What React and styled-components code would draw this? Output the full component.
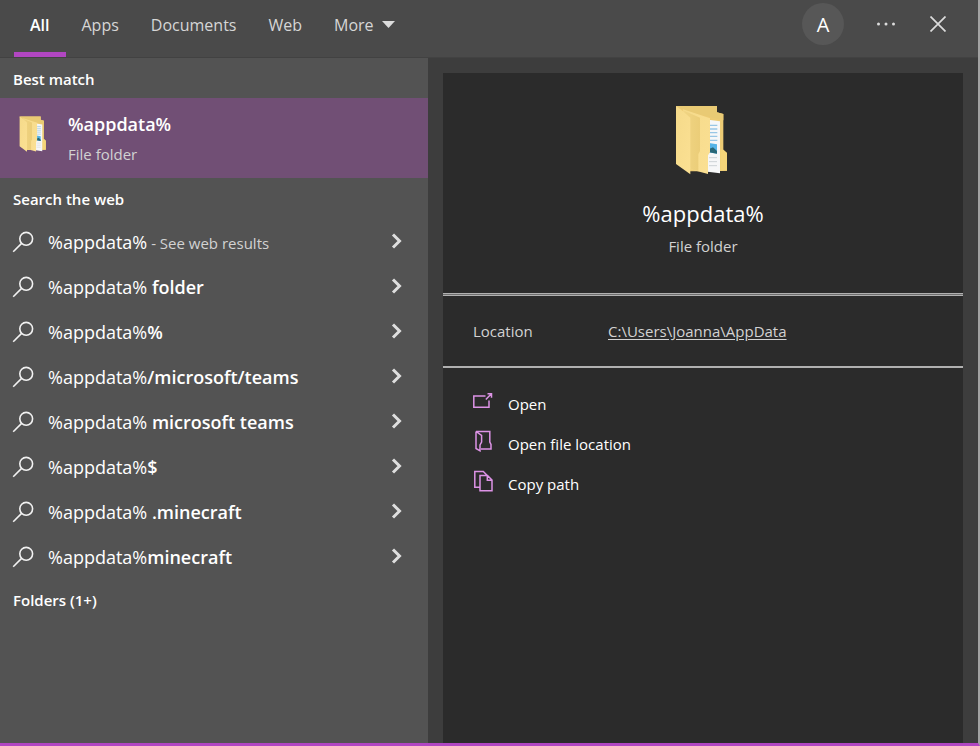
import React, { useState } from "react";
import styled, { createGlobalStyle } from "styled-components";

const GlobalStyle = createGlobalStyle`
  * {
    box-sizing: border-box;
  }
  body {
    margin: 0;
    background: #3d3d3d;
    color: #ffffff;
    font-family: "Open Sans", "Noto Sans", sans-serif;
    font-size: 15px;
  }
  button {
    border: 0;
    padding: 0;
    background: none;
    color: inherit;
    font: inherit;
    cursor: pointer;
  }
  h1, h2, p, ul, dl, dd {
    margin: 0;
    padding: 0;
  }
  svg {
    display: block;
    flex: none;
  }
`;

const Window = styled.div`
  display: flex;
  flex-direction: column;
  min-height: 100vh;
  border-right: 2px solid #a3a3a3;
  border-bottom: 3px solid #b146c2;
`;

const TopBar = styled.header`
  display: flex;
  justify-content: space-between;
  height: 58px;
  padding: 0 20px 0 14px;
  background: #4a4a4a;
  border-bottom: 1px solid #424242;
`;

const Tabs = styled.nav`
  display: flex;
`;

const Tab = styled.button`
  display: flex;
  align-items: center;
  gap: 8px;
  padding: 0 16px 3px;
  border-bottom: 5px solid ${(props) => (props.$active ? "#b146c2" : "transparent")};
  color: ${(props) => (props.$active ? "#ffffff" : "#d6d6d6")};
  font-size: 16px;
  font-weight: ${(props) => (props.$active ? 600 : 400)};
`;

const Tools = styled.div`
  display: flex;
  align-items: center;
  gap: 12px;
  padding-bottom: 9px;
`;

const Avatar = styled.button`
  width: 42px;
  height: 42px;
  margin-right: 10px;
  border-radius: 50%;
  background: #575757;
  font-size: 20px;
`;

const ToolBtn = styled.button`
  display: flex;
  align-items: center;
  justify-content: center;
  width: 40px;
  height: 40px;
  color: #dcdcdc;
`;

const Main = styled.main`
  display: flex;
  flex: 1;
`;

const Results = styled.section`
  flex: none;
  width: 428px;
  background: #535353;
`;

const GroupTitle = styled.h2`
  padding: 2px 13px 0;
  font-size: 15px;
  font-weight: 600;
  line-height: 38px;
`;

const BestMatch = styled.button`
  display: flex;
  gap: 20px;
  width: 100%;
  height: 80px;
  padding: 11px 19px;
  background: #714f75;
  text-align: left;
  svg {
    margin-top: 7px;
  }
`;

const BestName = styled.p`
  font-size: 18px;
  font-weight: 600;
  line-height: 30px;
`;

const Kind = styled.p`
  color: #d2d2d2;
  line-height: 30px;
`;

const List = styled.ul`
  list-style: none;
  padding-top: 1px;
`;

const ResultRow = styled.button`
  display: flex;
  align-items: center;
  gap: 14px;
  width: 100%;
  height: 45px;
  padding: 0 25px 0 12px;
  text-align: left;
  svg:last-child {
    margin-bottom: 2px;
  }
`;

const ResultText = styled.span`
  flex: 1;
  font-size: 18px;
  white-space: pre;
  b {
    font-weight: 600;
  }
  small {
    color: #d2d2d2;
    font-size: 15px;
  }
`;

const Details = styled.section`
  flex: 1;
  min-width: 0;
  margin: 15px 15px 0;
  background: #2b2b2b;
`;

const Hero = styled.div`
  display: flex;
  flex-direction: column;
  align-items: center;
  height: 221px;
  padding-top: 32px;
  border-bottom: 1px solid #b0b0b0;
`;

const HeroName = styled.h1`
  margin-top: 20px;
  font-size: 22px;
  font-weight: 400;
  line-height: 36px;
`;

const Info = styled.dl`
  display: flex;
  align-items: center;
  height: 74px;
  padding: 0 30px;
  border-top: 1px solid #6e6e6e;
  border-bottom: 2px solid #b0b0b0;
  box-shadow: inset 0 1px #b0b0b0;
  color: #d2d2d2;
  dt {
    width: 135px;
  }
  a {
    color: inherit;
    text-underline-offset: 2px;
  }
`;

const Actions = styled.ul`
  list-style: none;
  padding: 16px 30px;
`;

const Action = styled.button`
  display: flex;
  align-items: center;
  gap: 15px;
  height: 40px;
  svg {
    margin-bottom: 6px;
  }
`;


const FolderIcon = ({ width, height }) => (
  <svg width={width} height={height} viewBox="0 0 168 210" aria-hidden="true">
    <defs>
      <linearGradient id="cover" x1="0" y1="0" x2="1" y2="1">
        <stop offset="0" stopColor="#f5da8a" />
        <stop offset="1" stopColor="#fbe093" />
      </linearGradient>
      <linearGradient id="fold" x1="0" y1="0" x2="1" y2="0">
        <stop offset="0" stopColor="#f0d483" />
        <stop offset="1" stopColor="#ebcd78" />
      </linearGradient>
    </defs>
    <path d="M3 3H126V22L145 27V134L156 144V197L120 199H45Z" fill="#edcb74" />
    <path d="M3 3H126V22L145 27V46L40 20Z" fill="#e9ca74" />
    <path d="M145 134L156 144V197H136V134Z" fill="#f5d579" />
    <path d="M100 44L135 49V205L98 200Z" fill="#f6f7f8" />
    <path d="M105 61H127M105 72H127M105 83H127M105 94H127M105 106H127" stroke="#98c6e5" strokeWidth="4" />
    <path d="M102 114L126 118V146L102 142Z" fill="#55b4e8" />
    <path d="M102 132L114 127L126 138V146L102 142Z" fill="#286777" />
    <path d="M102 158H126M102 170H126M102 182H126" stroke="#ccd2d6" strokeWidth="3" />
    <path d="M24 13L105 40V142L99 151V207L46 193Z" fill="url(#cover)" />
    <path d="M27 17L75 38V138L70 148V198L46 193Z" fill="url(#fold)" />
    <path d="M3 3L22 17L46 38V208L3 177Z" fill="url(#cover)" />
  </svg>
);

const SearchIcon = () => (
  <svg width="22" height="22" viewBox="0 0 22 22" fill="none" stroke="#f2f2f2" strokeWidth="1.6">
    <circle cx="14.2" cy="7.8" r="6.4" />
    <path d="M9.6 12.4L1.2 20.8" />
  </svg>
);

const ChevronIcon = () => (
  <svg width="12" height="16" viewBox="0 0 12 16" fill="none" stroke="#dedede" strokeWidth="3">
    <path d="M2 1.5L8.5 8L2 14.5" />
  </svg>
);

const OpenIcon = () => (
  <svg width="20" height="22" viewBox="0 0 20 22" fill="none" stroke="#dd93e6" strokeWidth="1.5">
    <path d="M12.5 6H.8V17.2H16V10.5M12.8 9.5L18.2 4M14.5 3.8H18.5V7.8" />
  </svg>
);

const LocationIcon = () => (
  <svg width="20" height="22" viewBox="0 0 20 22" fill="none" stroke="#dd93e6" strokeWidth="1.5">
    <path d="M3 1.5H16.8V12L18 14.5V19H8M3 1.5V18.5L7 20.8V15L8.6 12V5.5L3 1.5" />
  </svg>
);

const CopyIcon = () => (
  <svg width="20" height="22" viewBox="0 0 20 22" fill="none" stroke="#dd93e6" strokeWidth="1.5">
    <path d="M6.5 17.2H1.8V1.5H10.3L14 5.2M7 5.5H14.5L19 10V20.8H7ZM14.3 5.5V10.2H19" />
  </svg>
);

const tabs = ["All", "Apps", "Documents", "Web", "More"];

const suggestions = [
  { text: "%appdata%", note: " - See web results" },
  { text: "%appdata% ", bold: "folder" },
  { text: "%appdata%", bold: "%" },
  { text: "%appdata%", bold: "/microsoft/teams" },
  { text: "%appdata% ", bold: "microsoft teams" },
  { text: "%appdata%", bold: "$" },
  { text: "%appdata% ", bold: ".minecraft" },
  { text: "%appdata%", bold: "minecraft" },
];

const actions = [
  { label: "Open", Icon: OpenIcon },
  { label: "Open file location", Icon: LocationIcon },
  { label: "Copy path", Icon: CopyIcon },
];


const App = () => {

  let [active, setActive] = useState("All");

  return (
    <Window>
      <GlobalStyle />

      <TopBar>
        <Tabs>
          {
            tabs.map((name) => (
              <Tab key={name} $active={name === active} onClick={() => setActive(name)}>
                {name}
                {name === "More" && (
                  <svg width="13" height="7" viewBox="0 0 13 7"><path d="M0 0H13L6.5 7Z" fill="#dcdcdc" /></svg>
                )}
              </Tab>
            ))
          }
        </Tabs>
        <Tools>
          <Avatar>A</Avatar>
          <ToolBtn aria-label="Options">
            <svg width="20" height="4" viewBox="0 0 20 4" fill="currentColor">
              <circle cx="2.5" cy="2" r="1.5" />
              <circle cx="10" cy="2" r="1.5" />
              <circle cx="17.5" cy="2" r="1.5" />
            </svg>
          </ToolBtn>
          <ToolBtn aria-label="Close">
            <svg width="16" height="16" viewBox="0 0 16 16" stroke="currentColor" strokeWidth="1.7">
              <path d="M.5 .5L15.5 15.5M15.5 .5L.5 15.5" />
            </svg>
          </ToolBtn>
        </Tools>
      </TopBar>

      <Main>
        {/* result list */}
        <Results>
          <GroupTitle>Best match</GroupTitle>
          <BestMatch>
            <FolderIcon width={29} height={36} />
            <div>
              <BestName>%appdata%</BestName>
              <Kind>File folder</Kind>
            </div>
          </BestMatch>

          <GroupTitle>Search the web</GroupTitle>
          <List>
            {
              suggestions.map((s, i) => (
                <li key={i}>
                  <ResultRow>
                    <SearchIcon />
                    <ResultText>
                      {s.text}
                      {s.bold && <b>{s.bold}</b>}
                      {s.note && <small>{s.note}</small>}
                    </ResultText>
                    <ChevronIcon />
                  </ResultRow>
                </li>
              ))
            }
          </List>

          <GroupTitle>Folders (1+)</GroupTitle>
        </Results>

        {/* selected item */}
        <Details>
          <Hero>
            <FolderIcon width={56} height={70} />
            <HeroName>%appdata%</HeroName>
            <Kind>File folder</Kind>
          </Hero>
          <Info>
            <dt>Location</dt>
            <dd><a href="#location">C:\Users\Joanna\AppData</a></dd>
          </Info>
          <Actions>
            {
              actions.map(({ label, Icon }) => (
                <li key={label}>
                  <Action><Icon />{label}</Action>
                </li>
              ))
            }
          </Actions>
        </Details>
      </Main>
    </Window>
  );

}

export default App;
